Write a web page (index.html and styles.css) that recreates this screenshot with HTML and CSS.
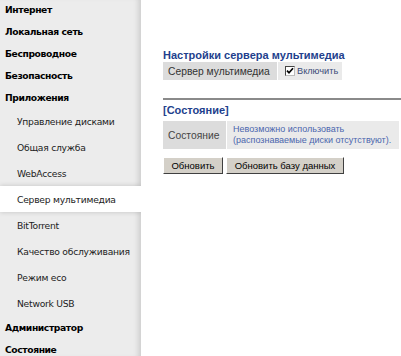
FILE: index.html
```html
<!DOCTYPE html>
<html lang="ru">
<head>
<meta charset="utf-8">
<link rel="stylesheet" href="styles.css">
</head>
<body>
<div class="page">
  <nav class="side">
    <ul class="menu">
      <li class="main">Интернет</li>
      <li class="main">Локальная сеть</li>
      <li class="main">Беспроводное</li>
      <li class="main">Безопасность</li>
      <li class="main">Приложения</li>
      <li class="sub">Управление дисками</li>
      <li class="sub">Общая служба</li>
      <li class="sub">WebAccess</li>
      <li class="sub selected">Сервер мультимедиа</li>
      <li class="sub">BitTorrent</li>
      <li class="sub">Качество обслуживания</li>
      <li class="sub">Режим eco</li>
      <li class="sub">Network USB</li>
      <li class="main">Администратор</li>
      <li class="main">Состояние</li>
    </ul>
  </nav>
  <main class="content">
    <h2 class="title">Настройки сервера мультимедиа</h2>
    <div class="row">
      <div class="cell label">Сервер мультимедиа</div>
      <div class="cell value">
        <span class="check"><svg width="8" height="8" viewBox="0 0 8 8"><path d="M1 3.6 L3 5.8 L7 1.2" fill="none" stroke="#000" stroke-width="1.7"/></svg></span>
        <span class="check-label">Включить</span>
      </div>
    </div>
    <hr class="sep">
    <h2 class="title status-title">[Состояние]</h2>
    <div class="row status-row">
      <div class="cell label status-label">Состояние</div>
      <div class="cell value status-value">Невозможно использовать<br>(распознаваемые диски отсутствуют).</div>
    </div>
    <div class="buttons">
      <button class="btn btn-refresh">Обновить</button>
      <button class="btn btn-db">Обновить базу данных</button>
    </div>
  </main>
</div>
</body>
</html>
```

FILE: styles.css
```css
* { box-sizing: border-box; }
html, body { margin: 0; padding: 0; background: #fff; }
body { font-family: "Liberation Sans", Arial, sans-serif; width: 401px; height: 356px; overflow: hidden; }

.page { display: flex; height: 356px; }

.side {
  width: 141px;
  flex: none;
  background: #ececec;
  box-shadow: inset -6px 0 5px -3px rgba(0,0,0,0.12);
  overflow: hidden;
}
.menu { list-style: none; margin: -2px 0 0 0; padding: 0; }
.menu li { display: flex; align-items: center; color: #000; white-space: nowrap; }
.menu .main {
  height: 22px;
  padding-left: 5px;
  font-family: "DejaVu Sans", sans-serif;
  font-weight: bold;
  font-size: 9.2px;
  letter-spacing: -0.4px;
}
.menu .sub {
  height: 26px;
  padding-left: 17px;
  font-family: "DejaVu Sans", sans-serif;
  font-size: 9.2px;
  letter-spacing: -0.25px;
  color: #222;
}
.menu .selected {
  background: #fff;
  position: relative;
  box-shadow: 0 0 5px rgba(0,0,0,0.18);
}

.content { flex: 1; padding: 49px 0 0 22px; }
.title {
  margin: 0;
  font-size: 11px;
  line-height: 13px;
  font-weight: bold;
  color: #233f8d;
}
.row { display: flex; gap: 1px; height: 18px; }
.cell { display: flex; align-items: center; white-space: nowrap; }
.label { background: #dcdcdc; color: #333; font-size: 10.3px; padding: 0 5px; width: 114px; }
.value { background: #eaeaea; padding: 0 0 0 7px; width: 64px; }
.check {
  width: 10px; height: 10px;
  border: 1px solid #444;
  border-right-color: #bbb; border-bottom-color: #bbb;
  background: #fff;
  display: flex; align-items: center; justify-content: center;
  margin-right: 2px;
  flex: none;
}
.check-label { font-size: 9.2px; color: #3b4a78; }

.sep { margin: 18px 0 0 0; border: 0; border-top: 2px solid #8a8a8a; height: 0; }
.status-title { margin-top: 4px; }
.status-row { height: 28px; margin-top: 4px; }
.status-label { width: 63px; padding: 0 5px; color: #444; }
.status-value {
  width: 172px;
  padding: 0 6px;
  font-size: 9px;
  line-height: 11px;
  color: #4a66ae;
}
.buttons { display: flex; gap: 3px; margin-top: 8px; }
.btn {
  height: 17px;
  padding: 0;
  background: #d4d0c8;
  border: 1px solid;
  border-color: #fff #404040 #404040 #fff;
  font-family: "Liberation Sans", Arial, sans-serif;
  font-size: 9.5px;
  color: #000;
  white-space: nowrap;
}
.btn-refresh { width: 60px; }
.btn-db { width: 118px; }
```
